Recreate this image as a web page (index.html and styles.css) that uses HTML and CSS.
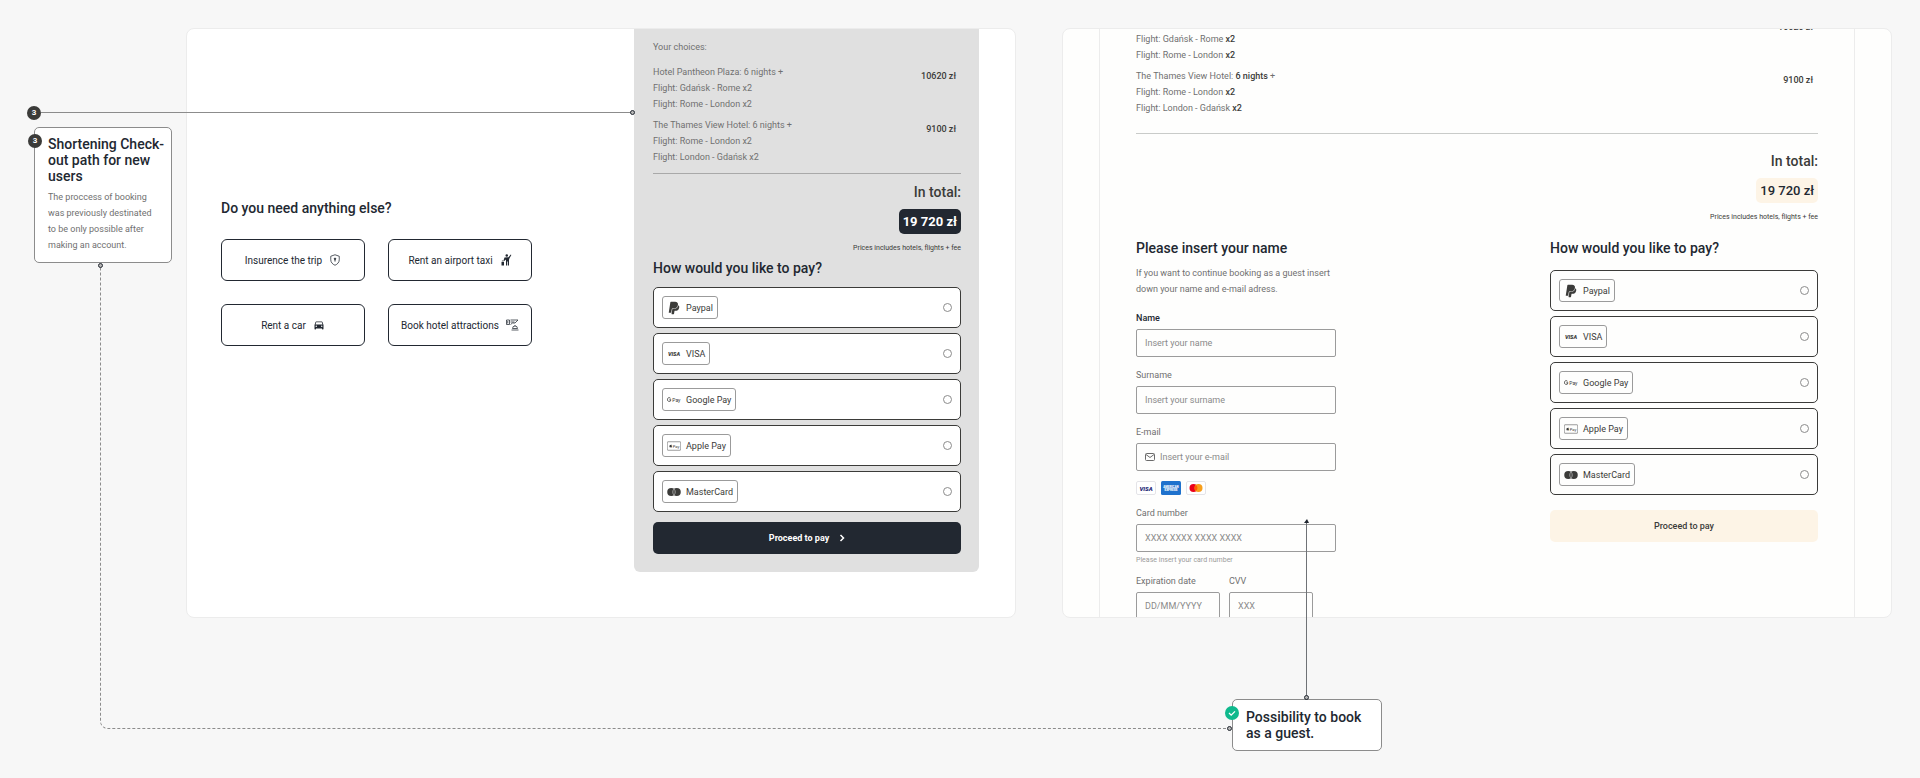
FILE: index.html
```html
<!DOCTYPE html>
<html lang="en">
<head>
  <meta charset="UTF-8" />
  <meta name="viewport" content="width=device-width, initial-scale=1.0"/>
  <title>Check-out path</title>
  <link rel="stylesheet" href="styles.css">
</head>
<body>
  <!-- shared icons -->
  <svg class="sprite" aria-hidden="true">
    <symbol id="i-paypal" viewBox="-64 0 512 512">
      <path d="M111.4 295.9c-3.5 19.2-17.4 108.7-21.5 134-.3 1.8-1 2.5-3 2.5H12.3c-7.6 0-13.1-6.6-12.1-13.9L58.8 46.6c1.5-9.6 10.1-16.9 20-16.9 152.3 0 165.1-3.7 204 11.4 60.1 23.3 65.6 79.5 44 140.3-21.5 62.6-72.5 89.5-140.1 90.3-43.4.7-69.5-7-75.3 24.2zM357.1 152c-1.8-1.3-2.5-1.8-3 1.3-2 11.4-5.1 22.5-8.8 33.6-39.9 113.8-150.5 103.9-204.5 103.9-6.1 0-10.1 3.3-10.9 9.4-22.6 140.4-27.1 169.7-27.1 169.7-1 7.1 3.5 12.9 10.6 12.9h63.5c8.6 0 15.7-6.3 17.4-14.9.7-5.4-1.1 6.1 14.4-91.3 4.6-22 14.3-19.7 29.3-19.7 71 0 126.4-28.8 142.9-112.3 6.5-34.8 4.6-71.4-23.8-92.6z"/>
    </symbol>
    <symbol id="i-visa" viewBox="0 0 28 28">
      <text x="14" y="18" text-anchor="middle" font-size="11" font-weight="900" font-style="italic">VISA</text>
    </symbol>
    <symbol id="i-gpay" viewBox="0 0 28 28">
      <path d="M8 13.5H4.8M8 13.5a3.7 3.7 0 1 1-1-3" fill="none" stroke="currentColor" stroke-width="1.6"/>
      <text x="10.5" y="17" font-size="10">Pay</text>
    </symbol>
    <symbol id="i-applepay" viewBox="0 0 28 28">
      <rect x="0.5" y="5.5" width="27" height="17" rx="1.5" fill="none" stroke="currentColor" stroke-width="1"/>
      <path d="M9.6 12.4c-.8-.7-1.6-.2-2-.2s-1.2-.5-2 .1c-1.5 1-.9 4.7.8 4.7.5 0 .7-.3 1.2-.3s.7.3 1.2.3c.8 0 1.3-1 1.5-1.7-1.4-.6-1.3-2.2-.7-2.9zM8.9 10c-.9.1-1.4.8-1.3 1.6.9 0 1.4-.8 1.3-1.6z"/>
      <text x="11.5" y="17" font-size="8">Pay</text>
    </symbol>
    <symbol id="i-mastercard" viewBox="0 0 28 28">
      <circle cx="8.5" cy="14" r="8"/>
      <circle cx="19.5" cy="14" r="8"/>
      <path d="M14 8.2a8 8 0 0 1 0 11.6a8 8 0 0 1 0-11.6z" stroke="#fff" stroke-width="1"/>
    </symbol>
  </svg>

  <main class="board">
    <aside class="notes">
      <span class="step step-line">3</span>
      <article class="note">
        <span class="step step-corner">3</span>
        <h2>Shortening Check-<br>out path for new<br>users</h2>
        <p>The proccess of booking<br>was previously destinated<br>to be only possible after<br>making an account.</p>
      </article>
    </aside>

    <section class="screen screen-before">
      <div class="extras">
        <h2>Do you need anything else?</h2>
        <div class="extras-grid">
          <button type="button">Insurence the trip
            <svg width="12" height="12" viewBox="0 0 24 24" fill="none" stroke="currentColor" stroke-width="1.5">
              <path d="M12 1.5l8.5 3v7c0 5-3.5 9-8.5 11-5-2-8.5-6-8.5-11v-7z"/>
              <circle cx="12" cy="9.5" r="1.5" fill="currentColor"/>
              <path d="M12 10v5" stroke-width="2"/>
            </svg>
          </button>
          <button type="button">Rent an airport taxi
            <svg width="12" height="12" viewBox="0 0 24 24" fill="currentColor">
              <circle cx="13.5" cy="3" r="2.5"/>
              <path d="M9 7l8-.5 4.5-5.5 1.2 1-3.700 6.500-1 3V23h-2v-8h-1.500v8H12V11l-3.500 3-1.500-1z"/>
              <path d="M3 16h5v7H3z"/>
              <path d="M4.500 16v-3h2v3" fill="none" stroke="currentColor" stroke-width=".8"/>
            </svg>
          </button>
          <button type="button">Rent a car
            <svg width="12" height="12" viewBox="0 0 24 24" fill="currentColor">
              <path d="M18.92 6.01C18.72 5.42 18.16 5 17.5 5h-11c-.66 0-1.21.42-1.42 1.01L3 12v8c0 .55.45 1 1 1h1c.55 0 1-.45 1-1v-1h12v1c0 .55.45 1 1 1h1c.55 0 1-.45 1-1v-8l-2.08-5.99zM6.5 16c-.83 0-1.5-.67-1.5-1.5S5.67 13 6.5 13s1.5.67 1.5 1.5S7.33 16 6.5 16zm11 0c-.83 0-1.5-.67-1.5-1.5s.67-1.5 1.5-1.5 1.5.67 1.5 1.5-.67 1.5-1.5 1.5zM5 11l1.5-4.5h11L19 11H5z"/>
            </svg>
          </button>
          <button type="button">Book hotel attractions
            <svg width="13" height="12" viewBox="0 0 26 24" fill="none" stroke="currentColor" stroke-width="1.5">
              <path d="M1 2h6v9H1zM3.500 4v5M9 2h15l-6 6h-5l-4 3M9 6h8"/>
              <path d="M11 22h14M13 19a5 5 0 0 1 10 0zM18 14v-2"/>
            </svg>
          </button>
        </div>
      </div>

      <div class="summary">
        <p>Your choices:</p>
        <div class="trips">
          <div class="trip">
            <p>Hotel Pantheon Plaza: 6 nights +<br>Flight: Gdańsk - Rome x2<br>Flight: Rome - London x2</p>
            <strong>10620 zł</strong>
          </div>
          <div class="trip">
            <p>The Thames View Hotel: 6 nights +<br>Flight: Rome - London x2<br>Flight: London - Gdańsk x2</p>
            <strong>9100 zł</strong>
          </div>
        </div>
        <div class="total">
          <h2>In total:</h2>
          <span class="amount">19 720 zł</span>
          <small>Prices includes hotels, flights + fee</small>
        </div>
        <form class="pay">
          <h2>How would you like to pay?</h2>
          <div class="options">
            <label class="option"><span class="tag"><svg><use href="#i-paypal"/></svg>Paypal</span><input type="radio" name="pay-before"></label>
            <label class="option"><span class="tag"><svg><use href="#i-visa"/></svg>VISA</span><input type="radio" name="pay-before"></label>
            <label class="option"><span class="tag"><svg><use href="#i-gpay"/></svg>Google Pay</span><input type="radio" name="pay-before"></label>
            <label class="option"><span class="tag"><svg><use href="#i-applepay"/></svg>Apple Pay</span><input type="radio" name="pay-before"></label>
            <label class="option"><span class="tag"><svg><use href="#i-mastercard"/></svg>MasterCard</span><input type="radio" name="pay-before"></label>
          </div>
          <button type="button" class="proceed">Proceed to pay
            <svg width="6" height="8" viewBox="0 0 6 8" fill="none" stroke="currentColor" stroke-width="1.5"><path d="M1.5 1l3 3-3 3"/></svg>
          </button>
        </form>
      </div>
    </section>

    <section class="screen screen-after">
      <div class="page">
        <div class="trips">
          <div class="trip">
            <p>Hotel Pantheon Plaza: <b>6 nights</b> +<br>Flight: Gdańsk - Rome <b>x2</b><br>Flight: Rome - London <b>x2</b></p>
            <strong>10620 zł</strong>
          </div>
          <div class="trip">
            <p>The Thames View Hotel: <b>6 nights</b> +<br>Flight: Rome - London <b>x2</b><br>Flight: London - Gdańsk <b>x2</b></p>
            <strong>9100 zł</strong>
          </div>
        </div>
        <div class="total">
          <h2>In total:</h2>
          <span class="amount">19 720 zł</span>
          <small>Prices includes hotels, flights + fee</small>
        </div>

        <div class="columns">
          <form class="guest">
            <h2>Please insert your name</h2>
            <p>If you want to continue booking as a guest insert down your name and e-mail adress.</p>
            <div class="field">
              <label for="name" class="active">Name</label>
              <input type="text" id="name" placeholder="Insert your name">
            </div>
            <div class="field">
              <label for="surname">Surname</label>
              <input type="text" id="surname" placeholder="Insert your surname">
            </div>
            <div class="field field-mail">
              <label for="email">E-mail</label>
              <input type="email" id="email" placeholder="Insert your e-mail">
              <svg width="10" height="8" viewBox="0 0 10 8" fill="none" stroke="#6b6b6b"><rect x=".5" y=".5" width="9" height="7" rx="1"/><path d="M1 1.5l4 3 4-3"/></svg>
            </div>
            <div class="cards">
              <svg viewBox="0 0 20 14"><rect x=".5" y=".5" width="19" height="13" rx="1.5" fill="#fff" stroke="#e4e4e8"/><text x="10" y="9.5" text-anchor="middle" font-size="6" font-weight="900" font-style="italic" fill="#1f2a78">VISA</text></svg>
              <svg viewBox="0 0 20 14"><rect width="20" height="14" rx="1.5" fill="#1f72cd"/><text x="10" y="6.5" text-anchor="middle" font-size="3" font-weight="900" fill="#fff">AMERICAN</text><text x="10" y="10" text-anchor="middle" font-size="3" font-weight="900" fill="#fff">EXPRESS</text></svg>
              <svg viewBox="0 0 20 14"><rect x=".5" y=".5" width="19" height="13" rx="1.5" fill="#fff" stroke="#e4e4e8"/><circle cx="7.5" cy="7" r="4" fill="#eb001b"/><circle cx="12.5" cy="7" r="4" fill="#f79e1b"/><path d="M10 3.9a4 4 0 0 1 0 6.2a4 4 0 0 1 0-6.2z" fill="#ff5f00"/></svg>
            </div>
            <div class="field">
              <label for="card">Card number</label>
              <input type="text" id="card" placeholder="XXXX XXXX XXXX XXXX">
              <small>Please insert your card number</small>
            </div>
            <div class="field-pair">
              <div class="field">
                <label for="expires">Expiration date</label>
                <input type="text" id="expires" placeholder="DD/MM/YYYY">
              </div>
              <div class="field">
                <label for="cvv">CVV</label>
                <input type="text" id="cvv" placeholder="XXX">
              </div>
            </div>
          </form>

          <form class="pay">
            <h2>How would you like to pay?</h2>
            <div class="options">
              <label class="option"><span class="tag"><svg><use href="#i-paypal"/></svg>Paypal</span><input type="radio" name="pay-after"></label>
              <label class="option"><span class="tag"><svg><use href="#i-visa"/></svg>VISA</span><input type="radio" name="pay-after"></label>
              <label class="option"><span class="tag"><svg><use href="#i-gpay"/></svg>Google Pay</span><input type="radio" name="pay-after"></label>
              <label class="option"><span class="tag"><svg><use href="#i-applepay"/></svg>Apple Pay</span><input type="radio" name="pay-after"></label>
              <label class="option"><span class="tag"><svg><use href="#i-mastercard"/></svg>MasterCard</span><input type="radio" name="pay-after"></label>
            </div>
            <button type="button" class="proceed">Proceed to pay</button>
          </form>
        </div>
      </div>
    </section>

    <article class="note note-guest">
      <svg class="check" width="14" height="14" viewBox="0 0 14 14"><circle cx="7" cy="7" r="7" fill="#0fb98d"/><path d="M4 7l2.2 2.2L10 5.4" fill="none" stroke="#fff" stroke-width="1.3"/></svg>
      <h2>Possibility to book as a guest.</h2>
      <div class="arrow"></div>
    </article>

    <!-- connectors between the notes and the screens -->
    <div class="link link-step"></div>
    <div class="link link-guest"></div>
  </main>
</body>
</html>
```
FILE: styles.css
```css
*, *::before, *::after {
  box-sizing: border-box;
}

body {
  margin: 0;
  background-color: #f7f7f7;
  color: #707070;
  font-family: Roboto, "Liberation Sans", sans-serif;
  font-size: 9px;
  line-height: 16px;
}

h2, p {
  margin: 0;
}

h2 {
  color: #222831;
  font-size: 14px;
  font-weight: 500;
  line-height: 16px;
}

button, input {
  font-family: inherit;
  font-size: 9px;
}

.sprite {
  display: none;
}

.board {
  position: relative;
  display: grid;
  grid-template-columns: 186px minmax(0, calc(50% - 116px)) minmax(0, 1fr);
  row-gap: 81px;
  padding: 28px 28px 28px 0;
}

.screen-after {
  margin-left: 46px;
}

/* notes */
.notes {
  padding: 78px 14px 0 34px;
}

.note {
  position: relative;
  background-color: #fff;
  border: 1px solid #8c8c8c;
  border-radius: 5px;
  padding: 8px 8px 9px 13px;
}

.note h2 {
  white-space: nowrap;
}

.note p {
  margin-top: 5px;
}

.step {
  display: block;
  width: 14px;
  height: 14px;
  margin-left: -7px;
  border-radius: 50%;
  background-color: #3b3b39;
  color: #fff;
  font-size: 8px;
  font-weight: 700;
  line-height: 14px;
  text-align: center;
}

.step-line {
  margin-bottom: 7px;
}

.step-corner {
  position: absolute;
  top: 6px;
  left: 0;
}

.note-guest {
  grid-column: 3;
  justify-self: start;
  width: 150px;
  margin-left: 216px;
  padding: 9px 13px;
}

.note-guest h2 {
  white-space: normal;
}

.check {
  position: absolute;
  top: 6px;
  left: -8px;
}

/* screens */
.screen {
  overflow: hidden;
  aspect-ratio: 830 / 590;
  background-color: #fff;
  border: 1px solid #ececec;
  border-radius: 8px;
}

.screen-before {
  display: flex;
  align-items: flex-start;
  padding-right: 36px;
}

.screen-after {
  background-color: #fefefd;
  padding: 0 36px;
}

.extras {
  flex: 1;
  padding: 171px 0 0 34px;
}

.extras-grid {
  display: grid;
  grid-template-columns: 144px 144px;
  gap: 23px;
  margin-top: 23px;
}

.extras-grid button {
  display: flex;
  align-items: center;
  justify-content: center;
  gap: 7px;
  height: 42px;
  padding: 0;
  background-color: #fff;
  border: 1px solid #222831;
  border-radius: 6px;
  color: #222831;
  font-size: 10px;
}

.summary {
  width: 345px;
  padding: 10px 18px 18px 19px;
  background-color: #e0e0e0;
  border-radius: 0 0 6px 6px;
}

.trips {
  display: flex;
  flex-direction: column;
  gap: 5px;
  padding-bottom: 8px;
  border-bottom: 1px solid #a9a9a9;
}

.summary .trips {
  margin-top: 9px;
}

.trip {
  display: flex;
  justify-content: space-between;
  padding-right: 5px;
}

.trip strong {
  padding-top: 4px;
  color: #3b3b39;
  font-weight: 500;
}

.trip b {
  color: #3b3b39;
  font-weight: 500;
}

.total {
  display: flex;
  flex-direction: column;
  align-items: flex-end;
  padding-top: 8px;
}

.total h2 {
  color: #3b3b39;
  line-height: 20px;
}

.amount {
  margin: 7px 0 8px;
  padding: 0 4px;
  border-radius: 5px;
  background-color: #222831;
  color: #fff;
  font-size: 13px;
  font-weight: 700;
  line-height: 25px;
}

small {
  font-size: 7px;
  line-height: 12px;
}

.total small {
  color: #3b3b39;
}

.summary .pay {
  margin-top: 6px;
}

.options {
  display: flex;
  flex-direction: column;
  gap: 5px;
  margin: 11px 0 10px;
}

.option {
  display: flex;
  align-items: center;
  justify-content: space-between;
  height: 41px;
  padding: 0 8px;
  background-color: #fff;
  border: 1px solid #3b3b39;
  border-radius: 5px;
}

.tag {
  display: flex;
  align-items: center;
  gap: 5px;
  height: 23px;
  padding: 0 4px;
  border: 1px solid #9b9b9b;
  border-radius: 3px;
  color: #3b3b39;
}

.tag svg {
  width: 14px;
  height: 14px;
  fill: currentColor;
}

.option input {
  appearance: none;
  width: 9px;
  height: 9px;
  margin: 0;
  border: 1px solid #8c8c8c;
  border-radius: 50%;
}

.option input:checked {
  background-color: #3b3b39;
}

.proceed {
  display: flex;
  align-items: center;
  justify-content: center;
  gap: 10px;
  width: 100%;
  height: 32px;
  border: none;
  border-radius: 5px;
  background-color: #222831;
  color: #fff;
  font-weight: 700;
}

/* guest check-out */
.page {
  padding: 0 36px;
  border: solid #ececec;
  border-width: 0 1px;
}

.page .trips {
  margin-top: -14px;
  padding-bottom: 17px;
  border-color: #c9cbc9;
}

.page .total {
  padding-top: 17px;
}

.page .amount {
  background-color: #fdf4e6;
  color: #222831;
  font-weight: 500;
}

.columns {
  display: flex;
  justify-content: space-between;
  margin-top: 17px;
}

.page .pay {
  width: 268px;
}

.page .options {
  margin: 14px 0 15px;
}

.page .option {
  background-color: transparent;
}

.page .proceed {
  background-color: #fdf4e6;
  color: #3b3b39;
  font-weight: 500;
}

.guest {
  width: 200px;
}

.guest p {
  margin: 9px 0 13px;
}

.field {
  position: relative;
  margin-bottom: 10px;
}

.field label {
  display: block;
  margin-bottom: 3px;
}

.field .active {
  color: #222831;
  font-weight: 500;
}

.field input {
  display: block;
  width: 100%;
  height: 28px;
  padding: 0 8px;
  background-color: transparent;
  border: 1px solid #9b9b9b;
  border-radius: 2px;
}

.field input::placeholder {
  color: #8a8a8a;
}

.field small {
  display: block;
  margin: 2px 0 -3px;
  color: #9b9b9b;
}

.field-mail input {
  padding-left: 23px;
}

.field-mail svg {
  position: absolute;
  left: 9px;
  bottom: 10px;
}

.cards {
  display: flex;
  gap: 5px;
  margin-bottom: 10px;
}

.cards svg {
  width: 20px;
  height: 14px;
}

.field-pair {
  display: grid;
  grid-template-columns: 84px 84px;
  gap: 9px;
}

/* connectors */
.link {
  position: absolute;
  pointer-events: none;
}

.link::before, .link::after, .arrow::before, .arrow::after {
  content: "";
  position: absolute;
}

.link::after, .link-guest::before, .arrow::after {
  width: 5px;
  height: 5px;
  border: 1px solid #222831;
  border-radius: 50%;
  background-color: #b5b5b5;
}

.link-step {
  top: 112px;
  left: 41px;
  width: calc(50% - 369px);
  border-top: 1px solid #8c8c8c;
}

.link-step::after {
  top: -3px;
  right: -3px;
}

.link-guest {
  top: 265px;
  bottom: 50px;
  left: 100px;
  width: calc(50% + 169px);
  border: dashed #8c8c8c;
  border-width: 0 0 1px 1px;
  border-bottom-left-radius: 8px;
}

.link-guest::before {
  top: -2px;
  left: -3px;
}

.link-guest::after {
  right: -3px;
  bottom: -3px;
}

.arrow {
  position: absolute;
  bottom: 100%;
  left: 73px;
  height: 180px;
  border-left: 1px solid #6f7276;
}

.arrow::before {
  top: -1px;
  left: -3px;
  border: solid transparent;
  border-width: 0 2px 4px 3px;
  border-bottom-color: #222831;
}

.arrow::after {
  bottom: 0;
  left: -3px;
}
```
